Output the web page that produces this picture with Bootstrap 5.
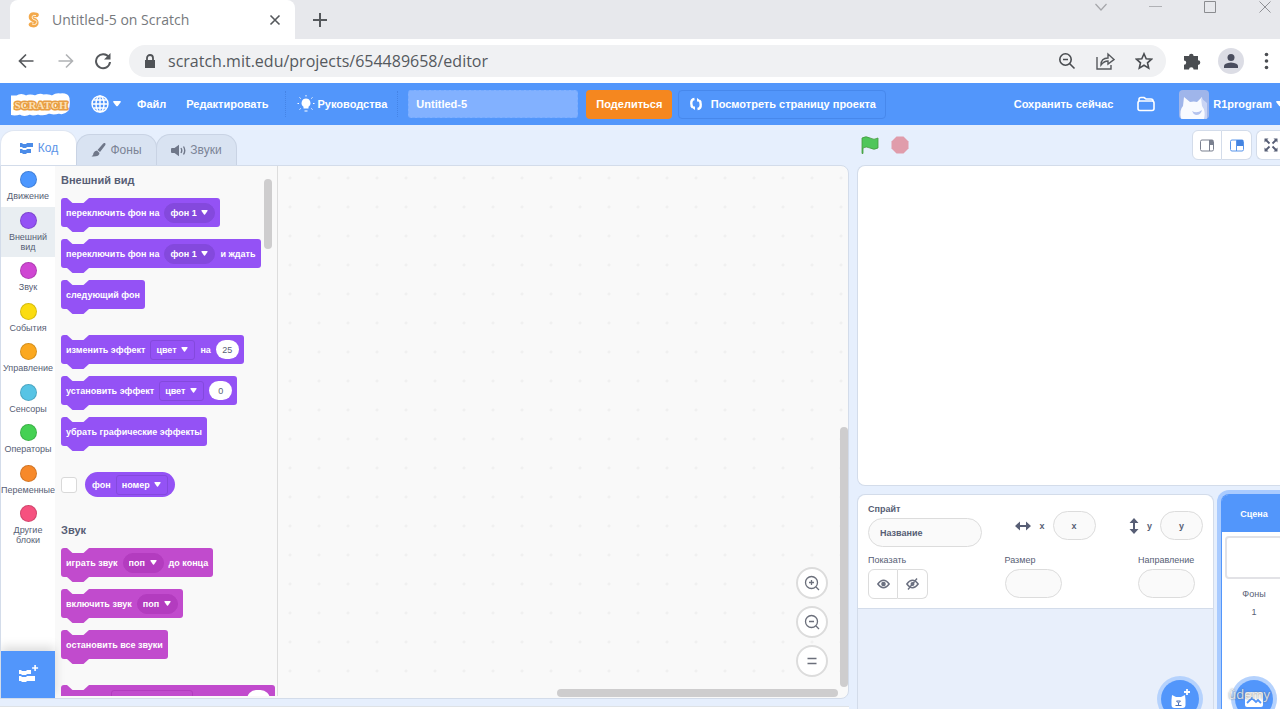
<!DOCTYPE html>
<html lang="ru">
<head>
<meta charset="utf-8">
<meta name="viewport" content="width=device-width, initial-scale=1">
<title>Untitled-5 on Scratch</title>
<link href="https://cdn.jsdelivr.net/npm/bootstrap@5.3.0/dist/css/bootstrap.min.css" rel="stylesheet">
<style>
  :root { --looks: #9452f5; --looks-dark: #8449dd; --sound: #c14bcd; --sound-dark: #b33cbf; --ink: #575e75; --line: #d3dcea; }
  body { height: 100vh; overflow: hidden; background: #e6effd; color: var(--ink); font: 11px/14px "Liberation Sans", Arial, sans-serif; }
  button, input, select { font: inherit; color: inherit; }
  svg { display: block; flex: none; }
  .plain { border: 0; background: none; padding: 0; }

  /* browser frame */
  .tabstrip { height: 39px; background: #e7e8ec; font: 14px/20px "Open Sans", sans-serif; }
  .page-tab { width: 285px; margin-left: 10px; padding: 0 13px 0 17px; background: #fff; border-radius: 8px 8px 0 0; color: #76797d; }
  .toolbar { height: 44px; background: #fff; padding: 0 11px 0 18px; color: #4a4d51; }
  .address { height: 32px; margin-left: 17px; padding: 0 13px 0 15px; background: #f0f1f3; border-radius: 16px; }
  .address input { font: 16px/20px "Open Sans", sans-serif; color: #55595e; }
  .person { width: 26px; height: 26px; background: #dcdde5; }

  /* editor menu */
  .menubar { height: 42px; background: #5296fb; color: #fff; font-weight: bold; padding-left: 11px; }
  .gap-wide { margin-left: 10px; }
  .rule { height: 26px; border-left: 1px dotted #4584e6; }
  .project-name { width: 170px; height: 28px; border: 1px dashed #74aaff; border-radius: 3px; background: #82b1ff; padding: 0 7px; }
  .share { width: 86px; height: 29px; background: #f5871f; border-radius: 4px; }
  .see-page { width: 208px; height: 29px; border: 1px solid #4788ec; border-radius: 4px; margin-left: 6px; }
  .avatar { width: 30px; height: 29px; border-radius: 4px; overflow: hidden; }
  .account { margin-right: -4px; }

  /* editor tabs */
  .tab-row { height: 40px; flex: none; }
  .editor-tab { height: 31px; width: 81px; border: 1px solid #c9d3e4; border-bottom: 0; border-radius: 14px 14px 0 0; background: #d9e3f2; color: #7c8496; font-size: 12px; }
  .editor-tab + .editor-tab { margin-left: -1px; }
  .editor-tab.chosen { height: 35px; width: 77px; background: #fff; color: #5a93e8; border-color: #dfe6f2; }

  /* categories */
  .code-area { border: 1px solid var(--line); border-radius: 0 8px 8px 0; background: #f9f9f9; overflow: hidden; }
  .categories { width: 54px; background: #fff; font-size: 9px; line-height: 10px; }
  .categories button { width: 100%; padding: 5px 0 6px; white-space: nowrap; display: flex; flex-direction: column; align-items: center; gap: 3px; }
  .categories li:nth-child(even) button { padding-bottom: 5px; }
  .categories .current { background: #e9eef2; }
  .dot { width: 17px; height: 17px; border-radius: 50%; border: 1px solid rgba(0,0,0,.15); }
  .add-ext { height: 47px; background: #5296fb; box-shadow: 0 -4px 10px rgba(0,0,0,.15); }

  /* block palette */
  .palette { width: 223px; border-right: 1px solid #ddd; padding: 7px 0 0 6px; margin-bottom: 2px; overflow: hidden; }
  .palette h2 { font-size: 11px; line-height: 14px; font-weight: bold; margin: 0 0 11px; }
  .stack { display: flex; flex-direction: column; align-items: flex-start; gap: 12px; margin-bottom: 26px; }
  .blk { --c: var(--looks); --d: var(--looks-dark); position: relative; height: 29px; padding: 0 5px; gap: 5px; display: flex; align-items: center; flex: none; background: var(--c); color: #fff; border-radius: 3px; white-space: nowrap; font-size: 9px; font-weight: bold; }
  .blk::before, .blk::after { content: ""; position: absolute; left: 6px; width: 22px; height: 5px; clip-path: polygon(0 0, 100% 0, 75% 100%, 25% 100%); }
  .blk::before { top: 0; background: #f9f9f9; }
  .blk::after { top: 100%; background: var(--c); }
  .blk.snd { --c: var(--sound); --d: var(--sound-dark); }
  .blk.reporter { height: 25px; border-radius: 13px; padding: 0 7px; }
  .blk.reporter::before, .blk.reporter::after { display: none; }
  .blk select { appearance: none; height: 20px; border: 1px solid var(--d); border-radius: 3px; padding: 0 17px 0 5px; font-weight: bold;
    background: url("data:image/svg+xml,%3Csvg xmlns='http://www.w3.org/2000/svg' width='7' height='5'%3E%3Cpath d='M1 0h5q1 0 .5 1L4 4.500q-.5.5-1 0L.5 1Q0 0 1 0z' fill='%23fff'/%3E%3C/svg%3E") no-repeat right 6px center; }
  .blk select.pill { border-radius: 10px; background-color: var(--d); }
  .blk .num { width: 23px; height: 19px; border: 0; border-radius: 10px; background: #fff; color: var(--ink); text-align: center; padding: 0; font-weight: normal; }
  .blk.pitch { width: 214px; padding-left: 50px; }
  .blk.pitch select { width: 82px; background-image: none; }
  .tick { appearance: none; width: 16px; height: 16px; margin: 0; border: 1px solid #d9d9d9; border-radius: 3px; background: #fff; }

  /* workspace */
  .workspace { background: radial-gradient(circle at 12px 12px, #f0f0f0 1px, transparent 2px) 0 0 / 29px 29px; }
  .bar { position: absolute; background: #cecdce; border-radius: 4px; }
  .zoomers { right: 20px; bottom: 21px; gap: 7px; }
  .zoomers button { width: 32px; height: 32px; border: 2px solid #dcdcdc; border-radius: 50%; background: #fff; padding: 0; }

  /* stage side */
  .right-col { flex: 0 0 423px; min-width: 0; margin-left: 8px; }
  .layout-btn { width: 30px; height: 30px; border: 1px solid var(--line); background: #fff; padding: 0; display: flex; align-items: center; justify-content: center; flex: none; }
  .sprite-info .layout-btn { border-color: #dcdcdc; }
  .stage { height: 321px; border: 1px solid var(--line); border-radius: 8px 0 0 8px; background: #fff; border-right: 0; }
  .sprites { width: 357px; border: 1px solid var(--line); border-bottom: 0; border-radius: 8px 8px 0 0; background: #e8effb; }
  .sprite-info { background: #fff; border-bottom: 1px solid var(--line); border-radius: 8px 8px 0 0; padding: 9px 10px; font-size: 9px; line-height: 10px; }
  .oval { height: 29px; border: 1px solid #dcdcdc; border-radius: 15px; background: #fafafa; min-width: 0; }
  .oval::placeholder { color: var(--ink); opacity: 1; }
  .w-name { width: 114px; padding: 0 11px; }
  .w-pos { width: 43px; text-align: center; padding: 0; }
  .w-dim { width: 57px; }
  .scene { width: 66px; flex: none; border: 1px solid #5296fb; border-bottom: 0; border-radius: 8px 8px 0 0; background: #fff; box-shadow: 0 0 0 4px #a9cbff; font-size: 9px; }
  .scene-head { height: 37px; background: #5296fb; color: #fff; font-weight: bold; border-radius: 6px 6px 0 0; }
  .thumb { height: 43px; margin: 4px 3px 8px; border: 2px solid #e2e2e6; border-radius: 4px; }
  .fab { position: absolute; bottom: -9px; width: 38px; height: 38px; border: 0; padding: 0; border-radius: 50%; background: #5296fb; box-shadow: 0 0 0 4px #b5d2fd; display: flex; align-items: center; justify-content: center; }
  .watermark { position: absolute; right: 10px; bottom: 5px; font: 13px/20px "Open Sans", sans-serif; color: rgba(255,255,255,.75); text-shadow: 0 0 2px #666; }
</style>
</head>
<body class="d-flex flex-column">

<header class="flex-shrink-0">
  <div class="tabstrip d-flex">
    <div class="page-tab d-flex align-items-center">
      <svg width="13" height="16" viewBox="0 0 13 16"><path d="M9.500 3Q4 1.500 4 5q0 2 3 3t2 4q-1 2-5 .5" fill="none" stroke="#f3a94b" stroke-width="4.600" stroke-linecap="round"/><path d="M9 3.500Q5 2.500 5 5t3 3 1 4q-1 1-4 0" fill="none" stroke="#fff2dc" stroke-width="1"/></svg>
      <span class="ms-2 ps-1">Untitled-5 on Scratch</span>
      <button class="plain ms-auto" aria-label="Закрыть вкладку"><svg width="14" height="14" viewBox="0 0 14 14" stroke="#55585c" stroke-width="1.600"><path d="M2.500 2.500l9 9M11.500 2.500l-9 9"/></svg></button>
    </div>
    <button class="plain ms-3" aria-label="Новая вкладка"><svg width="18" height="18" viewBox="0 0 18 18" stroke="#55585c" stroke-width="2"><path d="M9 2v14M2 9h14"/></svg></button>
    <div class="ms-auto d-flex align-items-start" style="gap:41px">
      <button class="plain" aria-label="Список"><svg width="14" height="14" viewBox="0 0 14 14" fill="none" stroke="#a5a6aa" stroke-width="1.200"><path d="M1.500 4L7 10l5.500-6"/></svg></button>
      <button class="plain" aria-label="Свернуть"><svg width="13" height="14" viewBox="0 0 13 14" stroke="#b0b1b5"><path d="M0 6.500h13"/></svg></button>
      <button class="plain" aria-label="Развернуть"><svg width="14" height="14" viewBox="0 0 14 14" fill="none" stroke="#8b8c90"><path d="M1.500 1.500h11v11h-11z"/></svg></button>
      <button class="plain me-2" aria-label="Закрыть"><svg width="14" height="14" viewBox="0 0 14 14" stroke="#909196"><path d="M1.500 1.500l11 11M12.500 1.500l-11 11"/></svg></button>
    </div>
  </div>

  <div class="toolbar d-flex align-items-center">
    <button class="plain" aria-label="Назад"><svg width="16" height="16" viewBox="0 0 16 16" fill="none" stroke="#55585c" stroke-width="1.700"><path d="M15.500 8H1.500M8 1.500L1.500 8 8 14.500"/></svg></button>
    <button class="plain ms-4" aria-label="Вперёд"><svg width="16" height="16" viewBox="0 0 16 16" fill="none" stroke="#b0b2b5" stroke-width="1.600"><path d="M.5 8h14M8 1.500L14.500 8 8 14.500"/></svg></button>
    <button class="plain ms-3" aria-label="Обновить"><svg class="ms-1" width="18" height="18" viewBox="0 0 18 18" fill="none" stroke="#55585c" stroke-width="2"><path d="M15 5.500A7 7 0 1 0 16 10"/><path d="M16.500 1v6.500H10z" fill="#55585c" stroke="none"/></svg></button>
    <div class="address flex-fill d-flex align-items-center">
      <svg width="12" height="15" viewBox="0 0 12 15"><path d="M1 6h10v8H1z" fill="#505357"/><path d="M3 6V4a3 3 0 0 1 6 0v2" fill="none" stroke="#505357" stroke-width="1.800"/></svg>
      <input class="plain flex-fill ms-2 ps-1" value="scratch.mit.edu/projects/654489658/editor" aria-label="Адрес">
      <button class="plain" aria-label="Масштаб"><svg width="18" height="18" viewBox="0 0 18 18" fill="none" stroke="#4a4d51" stroke-width="1.600"><circle cx="7.500" cy="7.500" r="5.700"/><path d="M5 7.500h5M11.500 11.500l5 5"/></svg></button>
      <button class="plain ms-3" aria-label="Отправить"><svg class="mx-1" width="19" height="18" viewBox="0 0 19 18" fill="none" stroke="#55585c" stroke-width="1.400"><path d="M1 5v12h14v-4M5 13q0-7 7-7V2l6 5.500L12 12V9q-4 0-7 4z"/></svg></button>
      <button class="plain ms-3" aria-label="Закладка"><svg width="18" height="18" viewBox="0 0 18 18" fill="none" stroke="#4a4d51" stroke-width="1.600"><path d="M9 1.800l2.200 5 5.300.4-4 3.600 1.200 5.300L9 13.300l-4.700 2.800 1.200-5.300-4-3.600 5.300-.4z"/></svg></button>
    </div>
    <button class="plain ms-3" aria-label="Расширения"><svg width="20" height="20" viewBox="0 0 20 20" fill="#4a4d51"><path d="M2 5h5a2.300 2.300 0 1 1 4.600 0h4.400v4.300a2.300 2.300 0 1 1 0 4.600V18.500h-4.400a2.300 2.300 0 1 0-4.600 0H2v-4.700a2.200 2.200 0 1 0 0-4.400z"/></svg></button>
    <button class="plain person rounded-circle d-flex align-items-center justify-content-center ms-3" aria-label="Профиль"><svg width="16" height="16" viewBox="0 0 16 16" fill="#4a4d5e"><circle cx="8" cy="4.500" r="3.500"/><path d="M1 15v-2q0-3 7-3.500 7 .5 7 3.500v2z"/></svg></button>
    <button class="plain ms-3" aria-label="Меню"><svg class="ms-1" width="5" height="18" viewBox="0 0 5 18" fill="#4a4d51"><circle cx="2.500" cy="2.500" r="1.800"/><circle cx="2.500" cy="9" r="1.800"/><circle cx="2.500" cy="15.500" r="1.800"/></svg></button>
  </div>
</header>

<nav class="menubar d-flex align-items-center text-nowrap flex-shrink-0">
  <a href="#" aria-label="Scratch"><svg width="60" height="26" viewBox="0 0 60 26"><path d="M6 6Q10 3 15 6q4-2 9 0 5-3 8-1 6-1 9 1 5-3 8-2 8-1 8 4 1 6-1 11-4 4-8 2-6 2-10 0-5 3-11 1-6 2-8 0-6 3-10 0-6 2-10 0-3-3-1-9-1-5 2-7z" fill="#fff" stroke="#fff" stroke-width="3" stroke-linejoin="round"/><text x="30" y="18" text-anchor="middle" font-family="Liberation Serif, serif" font-weight="bold" font-size="11" fill="none" stroke="#e89d42" stroke-width="3" stroke-linejoin="round">SCRATCH</text><text x="30" y="18" text-anchor="middle" font-family="Liberation Serif, serif" font-weight="bold" font-size="11" fill="#fbe0b4" aria-hidden="true">SCRATCH</text></svg></a>
  <button class="plain d-flex align-items-center gap-1 ms-3 ps-1" aria-label="Язык"><svg width="18" height="18" viewBox="0 0 18 18" fill="none" stroke="#fff" stroke-width="1.400"><circle cx="9" cy="9" r="8"/><ellipse cx="9" cy="9" rx="4" ry="8"/><path d="M9 1v16M1 9h16M2.500 5h13M2.500 13h13"/></svg><svg width="8" height="6" viewBox="0 0 8 6" fill="#fff"><path d="M1 0h6q1.500.3.500 1.600L4.800 4.900q-.8.8-1.600 0L.5 1.600Q-.5.300 1 0z"/></svg></button>
  <button class="plain ms-3 fw-bold">Файл</button>
  <button class="plain ms-3 ps-1 fw-bold">Редактировать</button>
  <div class="rule ms-3"></div>
  <button class="plain d-flex align-items-center fw-bold gap-wide"><svg width="22" height="18" viewBox="1 0 20 18" fill="#fff" stroke="#fff"><path d="M10 3.500a4.500 4.500 0 0 1 2.500 8.200v1.800h-5v-1.800A4.500 4.500 0 0 1 10 3.500zM8.500 15.500h3v1h-3z" stroke="none"/><path d="M10 0v1.500M3.500 2.500l1.200 1M16.500 2.500l-1.200 1M1.500 8.500H3M17 8.500h1.500M3.500 14.500l1.200-1M16.500 14.500l-1.200-1"/></svg>Руководства</button>
  <div class="rule gap-wide"></div>
  <input class="project-name fw-bold gap-wide" value="Untitled-5" aria-label="Название проекта">
  <button class="plain share fw-bold ms-2">Поделиться</button>
  <button class="plain see-page fw-bold d-flex align-items-center justify-content-center"><svg class="me-2" width="14" height="14" viewBox="0 0 14 14" fill="none" stroke="#fff" stroke-width="2.400"><path d="M5.500 2Q2 2.500 2.300 6.500q0 2.500 1.400 4M8.500 12q3.500-.5 3.200-4.500 0-2.500-1.400-4"/><path d="M1 9.500h5V13zM13 4.500H8V1z" fill="#fff" stroke="none"/></svg>Посмотреть страницу проекта</button>
  <button class="plain fw-bold ms-auto">Сохранить сейчас</button>
  <button class="plain ms-4" aria-label="Мои работы"><svg width="18" height="16" viewBox="0 0 18 16" fill="none" stroke="#fff" stroke-width="1.600"><path d="M2 5V3.500Q2 1.500 4 1.500h3L9 3h5q2 0 2 2"/><rect x="1" y="5" width="16" height="9.500" rx="2"/></svg></button>
  <button class="plain account d-flex align-items-center fw-bold ms-4"><span class="avatar me-1"><svg width="30" height="29" viewBox="0 0 30 29"><path d="M0 0h30v29H0z" fill="#9fb5ea"/><path d="M2 29Q0 20 4 16l1-9 6 5q4-1 7 0l5-5 1 8q6 6 3 12l-2 2z" fill="#f8faff"/><path d="M13 21q5 3 10-1-1 5-6 5-3-1-4-4z" fill="#b4c3ee"/><path d="M22 8l6 5v16h-3q2-8-2-13z" fill="#c9d4f4"/></svg></span>R1program<svg class="ms-1" width="8" height="6" viewBox="0 0 8 6" fill="#fff"><path d="M1 0h6q1.500.3.500 1.600L4.800 4.900q-.8.800-1.600 0L.5 1.600Q-.5.300 1 0z"/></svg></button>
</nav>

<main class="d-flex flex-fill overflow-hidden">
  <div class="d-flex flex-column flex-fill overflow-hidden">
    <div class="tab-row d-flex align-items-end">
      <button class="editor-tab chosen d-flex align-items-center justify-content-center gap-1 p-0"><svg width="15" height="13" viewBox="0 0 15 13" fill="#4c8ce8"><path d="M1 1h2l1 1h3l1-1h6v4H8L7 6H4L3 5H1zM1 7h2l1 1h3l1-1h4v4H8l-1 1H4l-1-1H1z"/></svg>Код</button>
      <button class="editor-tab d-flex align-items-center justify-content-center gap-1 p-0"><svg width="15" height="14" viewBox="0 0 15 14" fill="#6f7789"><path d="M14 0q1 1 0 2.500L9 9 6.500 7 12 .8q1-1 2-.8zM6 7.500L8.500 10q0 4-8 3.500 2-1 2-3.500 1-2.500 3.500-2.500z"/></svg>Фоны</button>
      <button class="editor-tab d-flex align-items-center justify-content-center gap-1 p-0"><svg width="15" height="13" viewBox="0 0 15 13" fill="#6f7789"><path d="M1 4h2.500L8 .8v11.400L3.500 9H1q-1 0-1-1V5q0-1 1-1z"/><path d="M10 4q1.500 2.500 0 5M12.500 2.500q2.500 4 0 8" fill="none" stroke="#6f7789" stroke-width="1.400"/></svg>Звуки</button>
    </div>

    <div class="code-area d-flex flex-fill">
      <div class="categories d-flex flex-column flex-shrink-0">
        <ul class="list-unstyled m-0 overflow-hidden flex-fill">
          <li><button class="plain"><span class="dot" style="background:#4c97ff"></span>Движение</button></li>
          <li class="current"><button class="plain"><span class="dot" style="background:#9452f5"></span><span>Внешний<br>вид</span></button></li>
          <li><button class="plain"><span class="dot" style="background:#cf46d3"></span>Звук</button></li>
          <li><button class="plain"><span class="dot" style="background:#fbdc10"></span>События</button></li>
          <li><button class="plain"><span class="dot" style="background:#fba81f"></span>Управление</button></li>
          <li><button class="plain"><span class="dot" style="background:#57c4e5"></span>Сенсоры</button></li>
          <li><button class="plain"><span class="dot" style="background:#45d153"></span>Операторы</button></li>
          <li><button class="plain"><span class="dot" style="background:#f7892a"></span>Переменные</button></li>
          <li><button class="plain"><span class="dot" style="background:#f6517f"></span><span>Другие<br>блоки</span></button></li>
        </ul>
        <button class="plain add-ext d-flex align-items-center justify-content-center" aria-label="Добавить расширение"><svg width="21" height="18" viewBox="0 0 21 18" fill="#fff"><path d="M1 5h2l1 1h4l1-1h4v4H9l-1 1H4L3 9H1zM1 11h2l1 1h4l1-1h8v5H9l-1 1H4l-1-1H1zM16.300 0h1.600v2.200h2.200v1.600h-2.200V6h-1.600V3.800h-2.200V2.200h2.200z"/></svg></button>
      </div>

      <div class="palette position-relative flex-shrink-0">
        <h2>Внешний вид</h2>
        <div class="stack">
          <div class="blk">переключить фон на <select class="pill" aria-label="Фон"><option>фон 1</option></select></div>
          <div class="blk">переключить фон на <select class="pill" aria-label="Фон"><option>фон 1</option></select> и ждать</div>
          <div class="blk">следующий фон</div>
        </div>
        <div class="stack">
          <div class="blk">изменить эффект <select aria-label="Эффект"><option>цвет</option></select> на <input class="num" value="25" aria-label="Изменение"></div>
          <div class="blk">установить эффект <select aria-label="Эффект"><option>цвет</option></select> <input class="num" value="0" aria-label="Значение"></div>
          <div class="blk">убрать графические эффекты</div>
        </div>
        <div class="stack flex-row align-items-center gap-2">
          <input type="checkbox" class="tick" aria-label="Показывать фон">
          <div class="blk reporter">фон <select aria-label="Свойство фона"><option>номер</option></select></div>
        </div>
        <h2>Звук</h2>
        <div class="stack">
          <div class="blk snd">играть звук <select class="pill" aria-label="Звук"><option>поп</option></select> до конца</div>
          <div class="blk snd">включить звук <select class="pill" aria-label="Звук"><option>поп</option></select></div>
          <div class="blk snd">остановить все звуки</div>
        </div>
        <div class="blk snd pitch justify-content-between"><select aria-label="Звуковой эффект"></select><input class="num" aria-label="Изменение эффекта"></div>
        <div class="bar" style="right:5px;top:13px;width:8px;height:70px"></div>
      </div>

      <div class="workspace position-relative flex-fill">
        <div class="zoomers position-absolute d-flex flex-column">
          <button aria-label="Приблизить"><svg class="m-auto" width="16" height="16" viewBox="0 0 16 16" fill="none" stroke="#6b6f7b" stroke-width="1.300"><circle cx="7.500" cy="7.500" r="6"/><path d="M5 7.500h5M7.500 5v5M12 12l3 3"/></svg></button>
          <button aria-label="Отдалить"><svg class="m-auto" width="16" height="16" viewBox="0 0 16 16" fill="none" stroke="#6b6f7b" stroke-width="1.300"><circle cx="7.500" cy="7.500" r="6"/><path d="M5 7.500h5M12 12l3 3"/></svg></button>
          <button aria-label="Сбросить масштаб"><svg class="m-auto" width="16" height="16" viewBox="0 0 16 16" fill="none" stroke="#6b6f7b" stroke-width="1.600"><path d="M3.500 5.500h9M3.500 10.500h9"/></svg></button>
        </div>
        <div class="bar" style="right:0;bottom:11px;width:8px;height:260px"></div>
        <div class="bar" style="right:10px;bottom:1px;width:281px;height:8px"></div>
      </div>
    </div>
    <div class="bg-white border-top flex-shrink-0" style="height:3px;margin-top:7px"></div>
  </div>

  <div class="right-col d-flex flex-column">
    <div class="tab-row d-flex align-items-center ps-1">
      <button class="plain" aria-label="Старт"><svg width="18" height="18" viewBox="0 0 18 18"><path d="M1 2q4-2.500 8 0t8 0v10q-4 2.500-8 0-4-2-7 0v5.500H1z" fill="#4fc65b" stroke="#45993d" stroke-width=".8"/></svg></button>
      <button class="plain ms-2" aria-label="Стоп"><svg class="ms-1" width="18" height="18" viewBox="0 0 18 18"><path d="M5.500.5h7l5 5v7l-5 5h-7l-5-5v-7z" fill="#e09cab"/></svg></button>
      <div class="d-flex ms-auto flex-shrink-0">
        <button class="layout-btn rounded-start" aria-label="Малая сцена"><svg width="14" height="13" viewBox="0 0 14 13" fill="none" stroke="#7b8190"><rect x=".5" y="1" width="13" height="11" rx="1.500"/><path d="M9.500 1v11M9.500 5.500h4"/><path d="M10 1h3v4h-3z" fill="#7b8190" stroke="none"/></svg></button>
        <button class="layout-btn rounded-end border-start-0" aria-label="Большая сцена"><svg width="14" height="13" viewBox="0 0 14 13" fill="none" stroke="#5a96ea"><rect x=".5" y="1" width="13" height="11" rx="1.500"/><path d="M6 1h7v6H6z" fill="#4584e0" stroke="none"/><path d="M6.500 1v11"/></svg></button>
        <button class="layout-btn rounded-start border-end-0 ms-1" style="width:24px" aria-label="Во весь экран"><svg class="ms-1" width="14" height="14" viewBox="0 0 14 14" fill="#575e75" stroke="#575e75" stroke-width="1.800"><path d="M2 2l3.500 3.500M12 2L8.500 5.500M2 12l3.500-3.500M12 12L8.500 8.500"/><path d="M.5.500h4l-4 4zM13.500.500h-4l4 4zM.5 13.500h4l-4-4zM13.500 13.500h-4l4-4z" stroke="none"/></svg></button>
      </div>
    </div>
    <div class="stage flex-shrink-0"></div>

    <div class="d-flex flex-fill mt-2" style="gap:7px">
      <section class="sprites position-relative flex-shrink-0">
        <div class="sprite-info">
          <div class="d-flex align-items-center justify-content-between">
            <div class="d-flex flex-column gap-1"><label for="sn" class="fw-bold">Спрайт</label><input id="sn" class="oval w-name fw-bold" placeholder="Название"></div>
            <div class="d-flex align-items-center gap-2"><svg width="16" height="10" viewBox="0 0 16 10" fill="#575e75"><path d="M0 5l5-4.500V4h6V.5L16 5l-5 4.500V6H5v3.500z"/></svg><label for="sx" class="fw-bold">x</label><input id="sx" class="oval w-pos fw-bold" placeholder="x"></div>
            <div class="d-flex align-items-center gap-2"><svg width="10" height="16" viewBox="0 0 10 16" fill="#575e75"><path d="M5 0L.5 5H4v6H.5L5 16l4.500-5H6V5h3.500z"/></svg><label for="sy" class="fw-bold">y</label><input id="sy" class="oval w-pos fw-bold" placeholder="y"></div>
          </div>
          <div class="d-flex justify-content-between pe-2 mt-2">
            <div class="d-flex flex-column gap-1"><span>Показать</span>
              <div class="d-flex">
                <button class="layout-btn rounded-start" aria-label="Показать"><svg width="13" height="10" viewBox="0 0 13 10" fill="none" stroke="#6b7080" stroke-width="1.400"><path d="M.8 5Q6.500-2.500 12.200 5 6.500 12.500.8 5z"/><circle cx="6.500" cy="5" r="1.600" fill="#6b7080"/></svg></button>
                <button class="layout-btn rounded-end border-start-0" aria-label="Скрыть"><svg width="13" height="12" viewBox="0 0 13 12" fill="none" stroke="#6b7080" stroke-width="1.400"><path d="M.8 6Q6.500-1.500 12.200 6 6.500 13.500.8 6zM2 11.500L11 .5"/><circle cx="6.500" cy="6" r="1.300"/></svg></button>
              </div></div>
            <div class="d-flex flex-column gap-1"><label for="sz">Размер</label><input id="sz" class="oval w-dim"></div>
            <div class="d-flex flex-column gap-1"><label for="sd">Направление</label><input id="sd" class="oval w-dim"></div>
          </div>
        </div>
        <button class="fab" style="right:14px" aria-label="Выбрать спрайт"><svg width="24" height="24" viewBox="0 0 24 24"><path d="M4 8l4 2h5l4-2 .5 5v5q0 3-3 3h-8q-3 0-3-3v-5z" fill="#fff"/><path d="M19 2v6M16 5h6" stroke="#fff" stroke-width="1.800"/><path d="M8.500 14h4l-2 2zM10.500 16v2M7.500 18.500h6" fill="none" stroke="#4c6fb5"/></svg></button>
      </section>
      <section class="scene position-relative text-center">
        <div class="scene-head d-flex align-items-center justify-content-center">Сцена</div>
        <div class="thumb"></div>
        <div>Фоны</div>
        <div class="mt-1">1</div>
        <button class="fab" style="right:13px" aria-label="Выбрать фон"><svg width="20" height="18" viewBox="0 0 20 18"><rect x="1" y="2" width="18" height="15" rx="2" fill="#fff"/><path d="M3 13l5-5 4 4 2-2 3 3" fill="none" stroke="#5296fb" stroke-width="1.800"/></svg></button>
      </section>
    </div>
  </div>
</main>
<div class="watermark">ûdemy</div>
<script src="https://cdn.jsdelivr.net/npm/bootstrap@5.3.0/dist/js/bootstrap.bundle.min.js"></script>
</body>
</html>
